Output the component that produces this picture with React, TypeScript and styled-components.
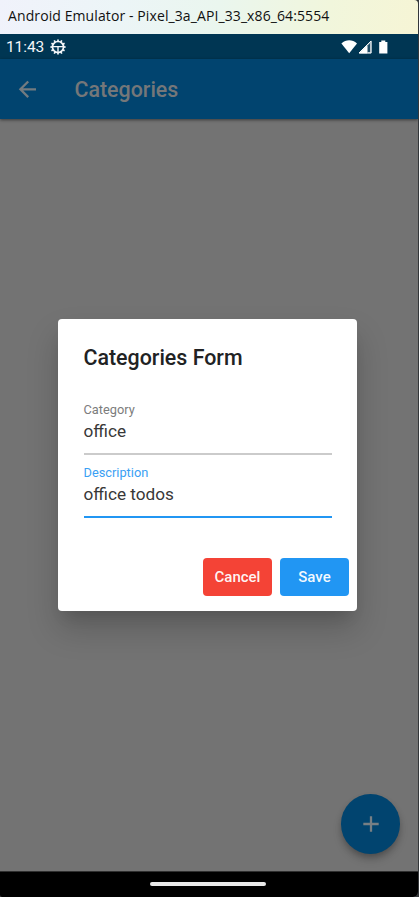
import React from "react";
import styled, { createGlobalStyle } from "styled-components";

const GlobalStyle = createGlobalStyle`
  *, *::before, *::after { box-sizing: border-box; }
  body { margin: 0; background: #34373a; font-family: Roboto, sans-serif; }
`;

const Window = styled.div`
  position: relative;
  display: flex;
  flex-direction: column;
  width: 418px;
  height: 897px;
  overflow: hidden;
  border-radius: 0 4px 5px 2px;
  background: #737373;
`;

const TitleBar = styled.header`
  height: 34px;
  flex: none;
  padding-left: 8px;
  background: linear-gradient(100deg, #f0f2fb 0%, #ecf5f7 28%, #eaf6ee 52%, #f1f6dc 78%, #f6f5d5 100%);
  color: #111;
  font: 400 14px/32px "Open Sans", sans-serif;
  letter-spacing: 0.1px;
  white-space: nowrap;
`;

const StatusBar = styled.div`
  display: flex;
  align-items: center;
  height: 25px;
  flex: none;
  padding: 0 29px 0 6px;
  background: #003653;
  color: #f4f7f9;
`;

const Clock = styled.span`
  padding-top: 1px;
  font-size: 15.5px;
  line-height: 24px;
  width: 44px;
  letter-spacing: -0.1px;
`;

const StatusIcons = styled.div`
  display: flex;
  align-items: center;
  margin-left: auto;
`;

const AppBar = styled.div`
  display: flex;
  align-items: center;
  height: 60px;
  flex: none;
  padding-left: 16px;
  background: #01446f;
  color: #737b80;
  box-shadow: 0 1px 3px rgba(0, 0, 0, 0.5);
`;

const Heading = styled.h1`
  margin: 2px 0 0 34.5px;
  font-size: 21.4px;
  font-weight: 500;
  line-height: 28px;
  color: #757779;
`;

const Body = styled.main`
  display: flex;
  flex: 1;
  align-items: flex-end;
  justify-content: flex-end;
  padding: 0 17.6px 17px 0;
`;

const AddButton = styled.div`
  display: flex;
  align-items: center;
  justify-content: center;
  width: 59.6px;
  height: 60px;
  border-radius: 50%;
  background: #01446f;
  box-shadow: 0 4px 6px -1px rgba(0, 0, 0, 0.25), 0 6px 10px rgba(0, 0, 0, 0.12);
`;

const NavBar = styled.footer`
  display: flex;
  justify-content: center;
  height: 26px;
  flex: none;
  padding-top: 9.5px;
  border-top: 1px solid #303030;
  background: #000;
`;

const Handle = styled.div`
  width: 116px;
  height: 4.5px;
  margin-right: 3px;
  border-radius: 3px;
  background: #e9e9e9;
`;

const Dialog = styled.section`
  position: absolute;
  left: 58px;
  top: 319px;
  display: flex;
  flex-direction: column;
  width: 299px;
  height: 292px;
  padding: 25px 8px 15px 26px;
  border-radius: 4px;
  background: #fff;
  box-shadow: 0 11px 15px -7px rgba(0, 0, 0, 0.12), 0 18px 32px 0 rgba(0, 0, 0, 0.19);
`;

const DialogTitle = styled.h2`
  margin: 0 0 30px -0.5px;
  font-size: 21.4px;
  font-weight: 500;
  line-height: 28px;
  color: #212223;
`;

const Field = styled.div<{ $focused?: boolean }>`
  flex: none;
  width: 248px;
  height: ${(p) => (p.$focused ? 63 : 53)}px;
  padding-top: ${(p) => (p.$focused ? 10 : 0)}px;
  border-bottom: 2px solid ${(p) => (p.$focused ? "#2196f3" : "#cbcbcb")};
`;

const FieldLabel = styled.div<{ $focused?: boolean }>`
  margin-left: -0.5px;
  font-size: 12.8px;
  line-height: 16px;
  color: ${(p) => (p.$focused ? "#3b9ff4" : "#7c7c7c")};
`;

const FieldValue = styled.div`
  margin: 1px 0 0 -0.5px;
  font-size: 17.2px;
  line-height: 24px;
  color: #383838;
`;

const Actions = styled.div`
  display: flex;
  justify-content: flex-end;
  gap: 8px;
  margin-top: auto;
`;

const Button = styled.button<{ $color: string }>`
  width: 69px;
  height: 38.5px;
  padding: 0;
  border: 0;
  border-radius: 4px;
  background: ${(p) => p.$color};
  color: rgba(255, 255, 255, 0.95);
  font: 500 15px/39px Roboto, sans-serif;
`;

const teeth = Array.from({ length: 12 }, (_, i) => i * 30);

const SettingsGear = () => (
  <svg width="16" height="16" viewBox="0 0 16 16" fill="none" stroke="currentColor">
    <circle cx="8" cy="8" r="5.5" strokeWidth="1.7" />
    {teeth.map((a) => (
      <path key={a} d="M8 .4v2" strokeWidth="1.7" transform={`rotate(${a} 8 8)`} />
    ))}
    <path d="M3 7.6h10M8 8v5" strokeWidth="1.4" />
  </svg>
);

const Indicators = () => (
  <svg width="48" height="16" viewBox="0 0 48 16" fill="none">
    <path d="M.4 4.6C5 .2 11.4.2 16 4.6L8.2 14.2z" fill="#fff" />
    <path d="M30.2 2.3v11.9H18.3z" fill="#8fa5b2" />
    <path d="M26 6.5v7.7h-7.7z" fill="#fff" />
    <path d="M27 6.6L29 4.6V13h-2z" fill="#1e4c66" />
    <path d="M30.1 2v12H18z" stroke="#fff" />
    <path d="M38.2 3h2.1V1.4h4V3h2.1v11.5h-8.2z" fill="#fff" />
  </svg>
);

const BackArrow = () => (
  <svg width="24" height="24" viewBox="0 0 24 24" fill="none" stroke="currentColor" strokeWidth="2.3">
    <path d="M20 12.3H5M12.2 4.5L4.4 12.3l7.8 7.8" />
  </svg>
);

const Plus = () => (
  <svg width="16" height="16" viewBox="0 0 16 16" stroke="#777f84" strokeWidth="2.3">
    <path d="M8 .3v15.4M.3 8h15.4" />
  </svg>
);

export default function App() {
  return (
    <>
      <GlobalStyle />
      <Window>
        <TitleBar>Android Emulator - Pixel_3a_API_33_x86_64:5554</TitleBar>
        <StatusBar>
          <Clock>11:43</Clock>
          <SettingsGear />
          <StatusIcons>
            <Indicators />
          </StatusIcons>
        </StatusBar>
        <AppBar>
          <BackArrow />
          <Heading>Categories</Heading>
        </AppBar>
        <Body>
          <AddButton>
            <Plus />
          </AddButton>
        </Body>
        <NavBar>
          <Handle />
        </NavBar>
        <Dialog>
          <DialogTitle>Categories Form</DialogTitle>
          <Field>
            <FieldLabel>Category</FieldLabel>
            <FieldValue>office</FieldValue>
          </Field>
          <Field $focused>
            <FieldLabel $focused>Description</FieldLabel>
            <FieldValue>office todos</FieldValue>
          </Field>
          <Actions>
            <Button $color="#f44336">Cancel</Button>
            <Button $color="#2196f3">Save</Button>
          </Actions>
        </Dialog>
      </Window>
    </>
  );
}
